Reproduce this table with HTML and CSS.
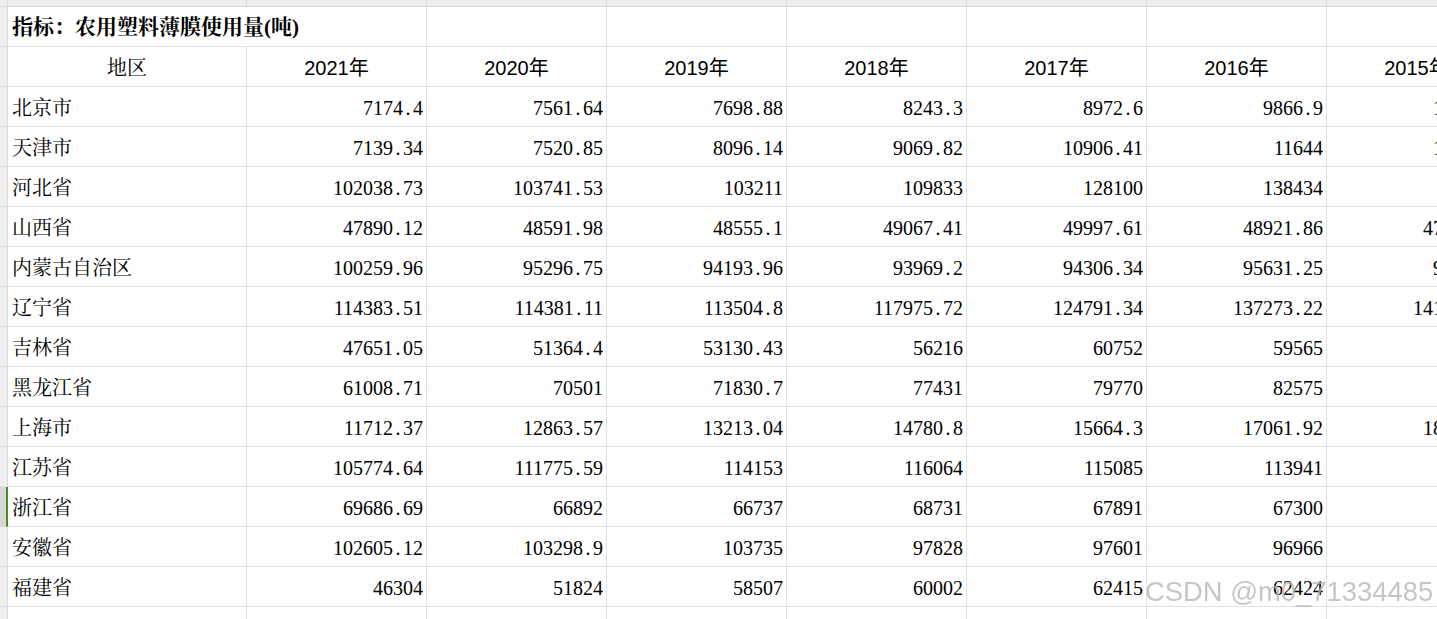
FILE: index.html
```html
<!DOCTYPE html>
<html lang="zh-CN">
<head>
<meta charset="utf-8">
<title>农用塑料薄膜使用量</title>
<link rel="stylesheet" href="styles.css">
</head>
<body>
<div class="sheet">
  <div class="corner"></div>
  <div class="th"></div><div class="th"></div><div class="th"></div><div class="th"></div><div class="th"></div><div class="th"></div><div class="th"></div><div class="th"></div>

  <div class="rh"></div>
  <div class="c title">指标：农用塑料薄膜使用量(吨)</div>
  <div class="c"></div><div class="c"></div><div class="c"></div><div class="c"></div><div class="c"></div><div class="c"></div>

  <div class="rh"></div>
  <div class="c cap">地区</div>
  <div class="c hd">2021年</div><div class="c hd">2020年</div><div class="c hd">2019年</div><div class="c hd">2018年</div><div class="c hd">2017年</div><div class="c hd">2016年</div><div class="c hd">2015年</div>

  <div class="rh"></div>
  <div class="c name">北京市</div>
  <div class="c num">7174<i>.</i>4</div><div class="c num">7561<i>.</i>64</div><div class="c num">7698<i>.</i>88</div><div class="c num">8243<i>.</i>3</div><div class="c num">8972<i>.</i>6</div><div class="c num">9866<i>.</i>9</div><div class="c num">10457<i>.</i>9</div>

  <div class="rh"></div>
  <div class="c name">天津市</div>
  <div class="c num">7139<i>.</i>34</div><div class="c num">7520<i>.</i>85</div><div class="c num">8096<i>.</i>14</div><div class="c num">9069<i>.</i>82</div><div class="c num">10906<i>.</i>41</div><div class="c num">11644</div><div class="c num">12187<i>.</i>4</div>

  <div class="rh"></div>
  <div class="c name">河北省</div>
  <div class="c num">102038<i>.</i>73</div><div class="c num">103741<i>.</i>53</div><div class="c num">103211</div><div class="c num">109833</div><div class="c num">128100</div><div class="c num">138434</div><div class="c num">141460</div>

  <div class="rh"></div>
  <div class="c name">山西省</div>
  <div class="c num">47890<i>.</i>12</div><div class="c num">48591<i>.</i>98</div><div class="c num">48555<i>.</i>1</div><div class="c num">49067<i>.</i>41</div><div class="c num">49997<i>.</i>61</div><div class="c num">48921<i>.</i>86</div><div class="c num">47420<i>.</i>58</div>

  <div class="rh"></div>
  <div class="c name">内蒙古自治区</div>
  <div class="c num">100259<i>.</i>96</div><div class="c num">95296<i>.</i>75</div><div class="c num">94193<i>.</i>96</div><div class="c num">93969<i>.</i>2</div><div class="c num">94306<i>.</i>34</div><div class="c num">95631<i>.</i>25</div><div class="c num">95182<i>.</i>5</div>

  <div class="rh"></div>
  <div class="c name">辽宁省</div>
  <div class="c num">114383<i>.</i>51</div><div class="c num">114381<i>.</i>11</div><div class="c num">113504<i>.</i>8</div><div class="c num">117975<i>.</i>72</div><div class="c num">124791<i>.</i>34</div><div class="c num">137273<i>.</i>22</div><div class="c num">141578<i>.</i>32</div>

  <div class="rh"></div>
  <div class="c name">吉林省</div>
  <div class="c num">47651<i>.</i>05</div><div class="c num">51364<i>.</i>4</div><div class="c num">53130<i>.</i>43</div><div class="c num">56216</div><div class="c num">60752</div><div class="c num">59565</div><div class="c num">60215</div>

  <div class="rh"></div>
  <div class="c name">黑龙江省</div>
  <div class="c num">61008<i>.</i>71</div><div class="c num">70501</div><div class="c num">71830<i>.</i>7</div><div class="c num">77431</div><div class="c num">79770</div><div class="c num">82575</div><div class="c num">82361</div>

  <div class="rh"></div>
  <div class="c name">上海市</div>
  <div class="c num">11712<i>.</i>37</div><div class="c num">12863<i>.</i>57</div><div class="c num">13213<i>.</i>04</div><div class="c num">14780<i>.</i>8</div><div class="c num">15664<i>.</i>3</div><div class="c num">17061<i>.</i>92</div><div class="c num">18452<i>.</i>36</div>

  <div class="rh"></div>
  <div class="c name">江苏省</div>
  <div class="c num">105774<i>.</i>64</div><div class="c num">111775<i>.</i>59</div><div class="c num">114153</div><div class="c num">116064</div><div class="c num">115085</div><div class="c num">113941</div><div class="c num">114320</div>

  <div class="rh sel"></div>
  <div class="c name">浙江省</div>
  <div class="c num">69686<i>.</i>69</div><div class="c num">66892</div><div class="c num">66737</div><div class="c num">68731</div><div class="c num">67891</div><div class="c num">67300</div><div class="c num">68215</div>

  <div class="rh"></div>
  <div class="c name">安徽省</div>
  <div class="c num">102605<i>.</i>12</div><div class="c num">103298<i>.</i>9</div><div class="c num">103735</div><div class="c num">97828</div><div class="c num">97601</div><div class="c num">96966</div><div class="c num">95820</div>

  <div class="rh"></div>
  <div class="c name">福建省</div>
  <div class="c num">46304</div><div class="c num">51824</div><div class="c num">58507</div><div class="c num">60002</div><div class="c num">62415</div><div class="c num">62424</div><div class="c num">61832</div>

  <div class="rh"></div>
  <div class="c"></div><div class="c"></div><div class="c"></div><div class="c"></div><div class="c"></div><div class="c"></div><div class="c"></div><div class="c"></div>
</div>
<div class="watermark">CSDN @m0_71334485</div>
</body>
</html>
```

FILE: styles.css
```css
html, body {
  margin: 0;
  padding: 0;
  background: #ffffff;
  overflow: hidden;
}

.sheet {
  display: grid;
  grid-template-columns: 8px 239px repeat(7, 180px);
  grid-template-rows: 7px;
  grid-auto-rows: 40px;
  width: 1507px;
  font-family: "Liberation Serif", "Noto Serif CJK SC", "Noto Sans CJK SC", serif;
  font-size: 20px;
  color: #000;
}

.corner,
.th {
  background: #eeeeee;
  border-right: 1px solid #d9d9d9;
  border-bottom: 1px solid #d9d9d9;
  box-sizing: border-box;
}

.rh {
  background: #eeeeee;
  border-right: 1px solid #d9d9d9;
  border-bottom: 1px solid #dcdcdc;
  box-sizing: border-box;
}

.rh.sel {
  background: #d8d8d8;
  border-right: 2px solid #3f8f22;
}

.c {
  box-sizing: border-box;
  border-right: 1px solid #e1e1e1;
  border-bottom: 1px solid #e1e1e1;
  display: flex;
  align-items: center;
  white-space: nowrap;
  line-height: 1;
}

.title {
  grid-column: span 2;
  font-weight: bold;
  font-size: 21px;
  padding-left: 4px;
  padding-top: 2px;
}

.cap {
  justify-content: center;
  padding-top: 2px;
}

.hd {
  justify-content: center;
  font-family: "Liberation Sans", "Noto Sans CJK SC", sans-serif;
  padding-top: 2px;
}

.name {
  padding-left: 4px;
  padding-top: 2px;
}

.num {
  justify-content: flex-end;
  padding-right: 3px;
  padding-top: 2px;
}

.num i {
  font-style: normal;
  display: inline-block;
  width: 10px;
  text-align: center;
}

.watermark {
  position: fixed;
  left: 1145px;
  top: 578px;
  font-family: "Liberation Sans", Arial, sans-serif;
  font-size: 27.4px;
  line-height: 1;
  color: rgba(120, 120, 120, 0.42);
  text-shadow: 0 0 1px rgba(255, 255, 255, 0.7);
  white-space: nowrap;
  pointer-events: none;
}
```
